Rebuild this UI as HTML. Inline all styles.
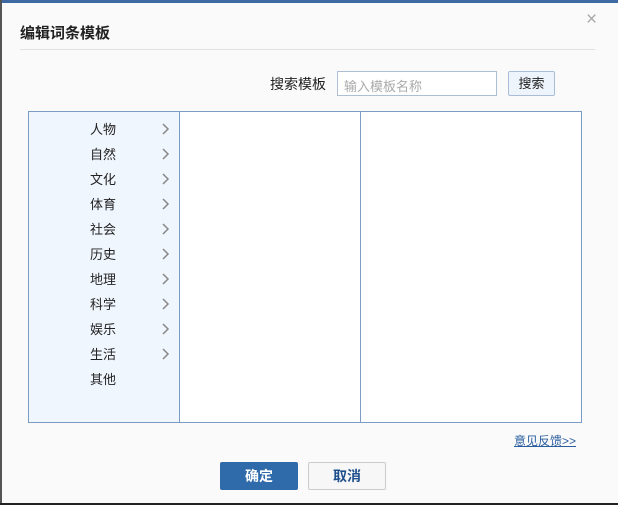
<!DOCTYPE html>
<html><head><meta charset="utf-8"><style>
*{margin:0;padding:0;box-sizing:border-box}
body{width:618px;height:505px;background:#fafafa;position:relative;overflow:hidden;font-family:"Liberation Sans","Noto Sans CJK SC",sans-serif;font-size:13px;color:#333}
.a{position:absolute}
</style></head><body>
<div class="a" style="left:0;top:0;width:618px;height:3px;background:#3d6aa3"></div>
<div class="a" style="left:0;top:0;width:2px;height:505px;background:#555"></div>
<div class="a" style="left:0;top:503px;width:618px;height:2px;background:#222"></div>
<div class="a" style="left:20px;top:22px;font-size:15px;font-weight:bold;color:#222">编辑词条模板</div>
<div class="a" style="left:586px;top:9px;font-size:19px;color:#aaa">×</div>
<div class="a" style="left:20px;top:49px;width:575px;height:1px;background:#e2e2e2"></div>
<div class="a" style="left:270px;top:74px;font-size:14px;color:#222">搜索模板</div>
<div class="a" style="left:337px;top:71px;width:160px;height:25px;border:1px solid #aebfd3;background:#fff;color:#aaa;font-size:13px;padding:4px 6px">输入模板名称</div>
<div class="a" style="left:508px;top:71px;width:47px;height:25px;border:1px solid #a9bdd6;background:#eef4fb;border-radius:2px;font-size:13px;text-align:center;line-height:23px;color:#222">搜索</div>
<div class="a" style="left:28px;top:111px;width:554px;height:312px;border:1px solid #7b9cc4;background:#fff"></div>
<div class="a" style="left:29px;top:112px;width:151px;height:310px;background:#f0f6fd;border-right:1px solid #7b9cc4"></div>
<div class="a" style="left:360px;top:112px;width:1px;height:310px;background:#7b9cc4"></div>
<div class="a" style="left:90px;top:117px;line-height:25px;font-size:13px;color:#222">人物<br>自然<br>文化<br>体育<br>社会<br>历史<br>地理<br>科学<br>娱乐<br>生活<br>其他</div>
<svg class="a" style="left:160px;top:120px" width="14" height="250">
<g fill="none" stroke="#888" stroke-width="1.5">
<path d="M3 4l5 5-5 5"/><path d="M3 29l5 5-5 5"/><path d="M3 54l5 5-5 5"/><path d="M3 79l5 5-5 5"/><path d="M3 104l5 5-5 5"/><path d="M3 129l5 5-5 5"/><path d="M3 154l5 5-5 5"/><path d="M3 179l5 5-5 5"/><path d="M3 204l5 5-5 5"/><path d="M3 229l5 5-5 5"/>
</g></svg>
<div class="a" style="left:514px;top:432px;font-size:12px;color:#2a5d9f;text-decoration:underline">意见反馈&gt;&gt;</div>
<div class="a" style="left:220px;top:462px;width:78px;height:28px;background:#2f6aab;border-radius:2px;color:#fff;font-weight:bold;font-size:14px;text-align:center;line-height:28px">确定</div>
<div class="a" style="left:308px;top:462px;width:78px;height:28px;background:#f7f7f7;border:1px solid #ccc;border-radius:2px;color:#1d4f8c;font-weight:bold;font-size:14px;text-align:center;line-height:26px">取消</div>
</body></html>
